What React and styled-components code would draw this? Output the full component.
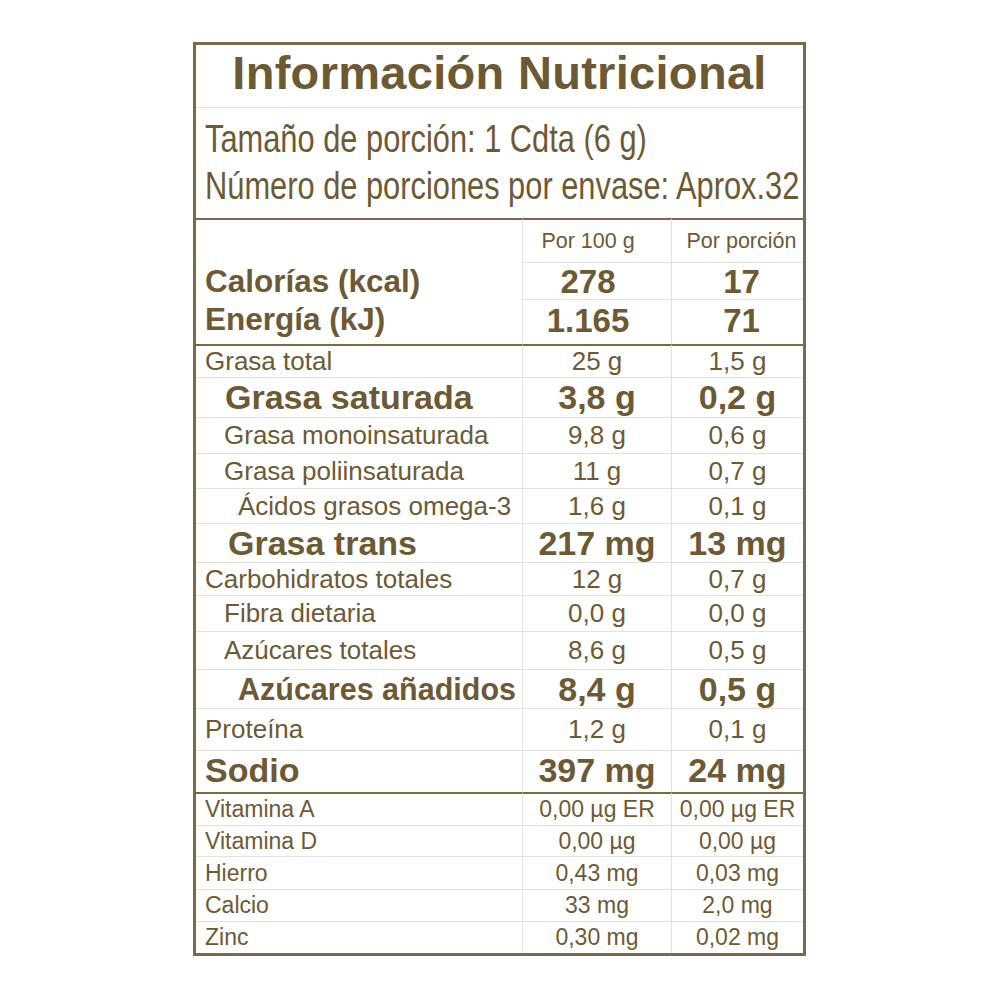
import React from 'react';
import styled, { createGlobalStyle } from 'styled-components';

const TEXT = '#6d5a34';
const BORDER = '#7b6a47';
const LIGHT = '#e3e2df';

const GlobalStyle = createGlobalStyle`
  html, body {
    margin: 0;
    padding: 0;
    background: #ffffff;
  }
  body {
    font-family: "Liberation Sans", Arial, sans-serif;
    color: ${TEXT};
  }
`;

const Page = styled.div`
  padding: 42px 0 0 193px;
  width: 1000px;
  height: 1000px;
  box-sizing: border-box;
`;

const Panel = styled.div`
  width: 613px;
  border: 3px solid ${BORDER};
  box-sizing: border-box;
  background: #fff;
`;

const Title = styled.div`
  height: 62px;
  box-sizing: border-box;
  padding-bottom: 8px;
  display: flex;
  align-items: center;
  justify-content: center;
  font-size: 47px;
  font-weight: 700;
  letter-spacing: 0.3px;
  white-space: nowrap;
`;

const Serving = styled.div`
  height: 111px;
  box-sizing: border-box;
  border-top: 1px solid ${LIGHT};
  padding: 7px 0 0 9px;
  overflow: hidden;
`;

const ServingLine = styled.div`
  font-size: 39px;
  line-height: 47px;
  white-space: nowrap;
  transform: scaleX(0.79);
  transform-origin: left center;
`;

const lineStyle = (line) => {
  if (line === 'thick') return `border-top: 2px solid ${BORDER};`;
  if (line === 'thin') return `border-top: 1px solid ${LIGHT};`;
  return 'border-top: 0;';
};

const Row = styled.div`
  display: grid;
  grid-template-columns: 326px 149px 1fr;
  height: ${(p) => p.$h}px;
`;

const Label = styled.div`
  ${(p) => lineStyle(p.$line)}
  display: flex;
  align-items: center;
  padding-left: ${(p) => p.$indent}px;
  padding-bottom: ${(p) => p.$lift || 0}px;
  font-size: ${(p) => p.$size}px;
  font-weight: ${(p) => (p.$bold ? 700 : 400)};
  white-space: nowrap;
  box-sizing: border-box;
`;

const Value = styled.div`
  ${(p) => lineStyle(p.$line)}
  border-left: 1px solid ${LIGHT};
  display: flex;
  align-items: center;
  justify-content: center;
  padding-left: ${(p) => p.$padL || 0}px;
  padding-right: ${(p) => p.$padR || 0}px;
  padding-bottom: ${(p) => p.$lift || 0}px;
  font-size: ${(p) => p.$size}px;
  font-weight: ${(p) => (p.$bold ? 700 : 400)};
  white-space: nowrap;
  box-sizing: border-box;
`;

const nutrients = [
  { label: 'Grasa total', a: '25 g', b: '1,5 g', h: 33, indent: 9, size: 26, line: 'thick' },
  { label: 'Grasa saturada', a: '3,8 g', b: '0,2 g', h: 40, indent: 29, size: 34, bold: true },
  { label: 'Grasa monoinsaturada', a: '9,8 g', b: '0,6 g', h: 36, indent: 28, size: 26 },
  { label: 'Grasa poliinsaturada', a: '11 g', b: '0,7 g', h: 35, indent: 28, size: 26 },
  { label: 'Ácidos grasos omega-3', a: '1,6 g', b: '0,1 g', h: 35, indent: 42, size: 26 },
  { label: 'Grasa trans', a: '217 mg', b: '13 mg', h: 39, indent: 32, size: 34, bold: true },
  { label: 'Carbohidratos totales', a: '12 g', b: '0,7 g', h: 33, indent: 9, size: 26 },
  { label: 'Fibra dietaria', a: '0,0 g', b: '0,0 g', h: 36, indent: 28, size: 26 },
  { label: 'Azúcares totales', a: '8,6 g', b: '0,5 g', h: 38, indent: 28, size: 26 },
  { label: 'Azúcares añadidos', a: '8,4 g', b: '0,5 g', h: 39, indent: 42, size: 30.5, vsize: 34, bold: true },
  { label: 'Proteína', a: '1,2 g', b: '0,1 g', h: 42, indent: 9, size: 26 },
  { label: 'Sodio', a: '397 mg', b: '24 mg', h: 42, indent: 9, size: 34, bold: true, lift: 2 },
];

const vitamins = [
  { label: 'Vitamina A', a: '0,00 µg ER', b: '0,00 µg ER', h: 33, line: 'thick' },
  { label: 'Vitamina D', a: '0,00 µg', b: '0,00 µg', h: 31 },
  { label: 'Hierro', a: '0,43 mg', b: '0,03 mg', h: 33 },
  { label: 'Calcio', a: '33 mg', b: '2,0 mg', h: 32 },
  { label: 'Zinc', a: '0,30 mg', b: '0,02 mg', h: 32 },
];

const NutrientRow = ({ row, vitamin }) => {
  const line = row.line || 'thin';
  const size = vitamin ? 23 : row.size;
  const vsize = vitamin ? 23 : row.vsize || row.size;
  return (
    <Row $h={row.h}>
      <Label $line={line} $indent={vitamin ? 9 : row.indent} $size={size} $bold={row.bold} $lift={row.lift}>
        {row.label}
      </Label>
      <Value $line={line} $size={vsize} $bold={row.bold} $lift={row.lift}>{row.a}</Value>
      <Value $line={line} $size={vsize} $bold={row.bold} $lift={row.lift}>{row.b}</Value>
    </Row>
  );
};

export default function App() {
  return (
    <>
      <GlobalStyle />
      <Page>
        <Panel>
          <Title>Información Nutricional</Title>
          <Serving>
            <ServingLine>Tamaño de porción: 1 Cdta (6 g)</ServingLine>
            <ServingLine>Número de porciones por envase: Aprox.32</ServingLine>
          </Serving>

          <Row $h={44}>
            <Label $line="thick" $indent={9} $size={21} />
            <Value $line="thick" $size={21.5} $padR={18}>Por 100 g</Value>
            <Value $line="thick" $size={21.5} $padL={8}>Por porción</Value>
          </Row>
          <Row $h={37}>
            <Label $line="none" $indent={9} $size={31.5} $bold $lift={6}>Calorías (kcal)</Label>
            <Value $line="thin" $size={33} $bold $padR={18} $lift={6}>278</Value>
            <Value $line="thin" $size={33} $bold $padL={8} $lift={6}>17</Value>
          </Row>
          <Row $h={45}>
            <Label $line="none" $indent={9} $size={31.5} $bold $lift={4}>Energía (kJ)</Label>
            <Value $line="thin" $size={33} $bold $padR={18} $lift={2}>1.165</Value>
            <Value $line="thin" $size={33} $bold $padL={8} $lift={2}>71</Value>
          </Row>

          {nutrients.map((row) => (
            <NutrientRow key={row.label} row={row} />
          ))}
          {vitamins.map((row) => (
            <NutrientRow key={row.label} row={row} vitamin />
          ))}
        </Panel>
      </Page>
    </>
  );
}
